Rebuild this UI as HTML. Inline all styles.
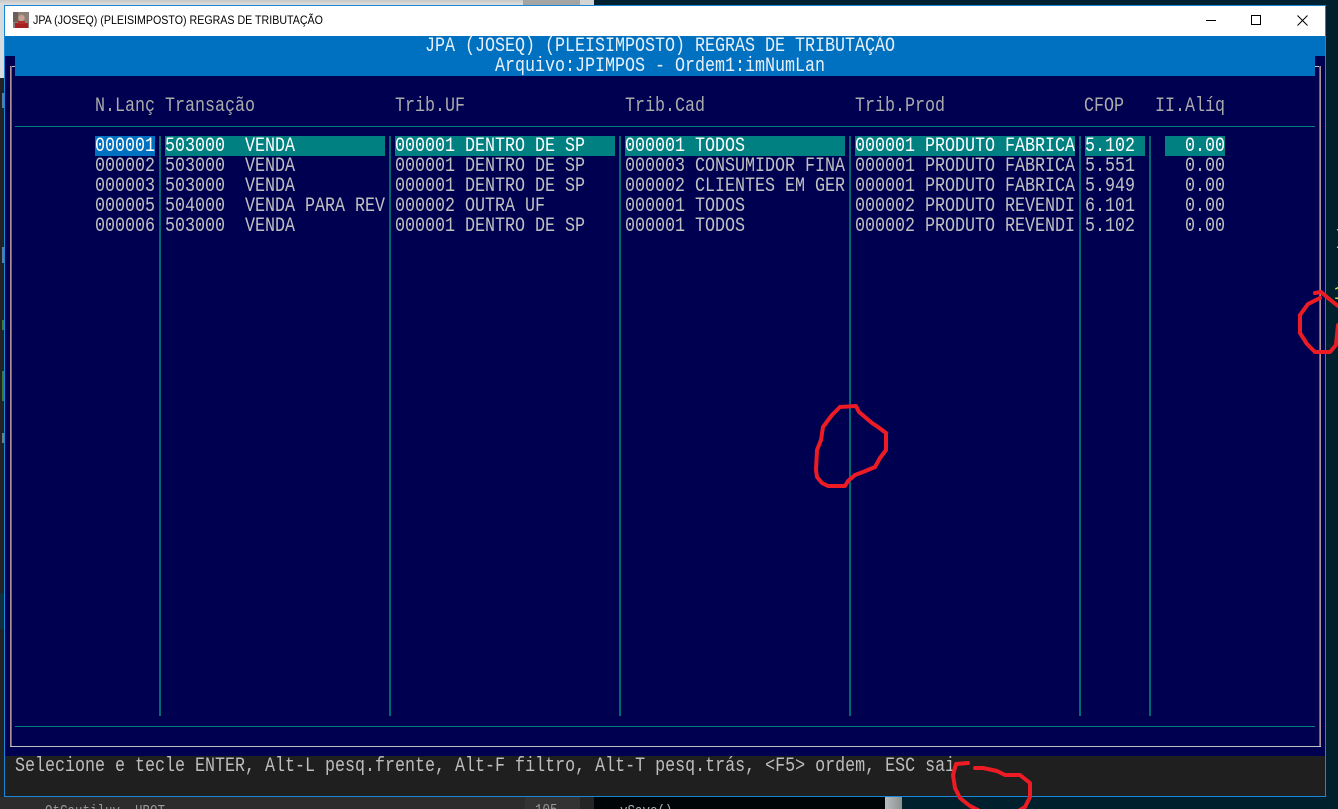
<!DOCTYPE html>
<html><head><meta charset="utf-8"><style>
html,body{margin:0;padding:0;background:#00202e}
#r{position:relative;width:1338px;height:809px;overflow:hidden;background:#00202e;font-family:"Liberation Mono",monospace}
#r div{position:absolute}
.t{font-size:20px;line-height:20px;height:20px;white-space:pre;transform:scaleX(.8333);transform-origin:0 0;color:#c0c0c0;letter-spacing:0}
.h{color:#ababab}
.w{color:#fff}
.v{width:2px;top:136px;height:580px;background:#006a70}
.s{height:20px;top:136px;background:#008080}
</style></head><body><div id="r">
<!-- background -->
<div style="left:0;top:0;width:523px;height:5px;background:linear-gradient(#c8c8c8,#dedede)"></div>
<div style="left:523px;top:0;width:57px;height:5px;background:#a4a4a4"></div>
<div style="left:580px;top:0;width:14px;height:5px;background:#d4d4d4"></div>
<div style="left:594px;top:0;width:744px;height:5px;background:#001f2f"></div>
<div style="left:0;top:5px;width:4px;height:800px;background:#232324"></div>
<div style="left:0;top:5px;width:4px;height:73px;background:#d4dce0"></div>
<div style="left:2px;top:93px;width:2px;height:15px;background:#5a7f9c"></div>
<div style="left:2px;top:247px;width:2px;height:16px;background:#5a7f9c"></div>
<div style="left:2px;top:320px;width:2px;height:10px;background:#3c7a3c"></div>
<div style="left:2px;top:371px;width:2px;height:30px;background:#3c7a3c"></div>
<div style="left:2px;top:433px;width:2px;height:10px;background:#707a80"></div>
<div style="left:0;top:593px;width:4px;height:36px;background:#10303f"></div>
<div style="left:0;top:797px;width:525px;height:12px;background:#2c2c2c"></div>
<div style="left:525px;top:797px;width:55px;height:12px;background:#333"></div>
<div style="left:580px;top:797px;width:14px;height:12px;background:#252525"></div>
<div style="left:594px;top:797px;width:291px;height:12px;background:#000608"></div>
<div style="left:885px;top:797px;width:17px;height:12px;background:linear-gradient(90deg,#b8bcbc,#8c9090)"></div>
<div class="t" style="left:45px;top:802px;font-size:15px;color:#9a9a9a">OtCautiluv  HBOT</div>
<div class="t" style="left:535px;top:801px;font-size:15px;color:#9a9a9a">105</div>
<div class="t" style="left:620px;top:802px;font-size:15px;color:#b0b0b0">vSave()</div>
<div class="t" style="left:1334px;top:230px;color:#c8e040">)</div>
<div class="t" style="left:1334px;top:285px;color:#c8e040">1</div>

<!-- window -->
<div style="left:4px;top:5px;width:1320px;height:790px;border:1px solid #1a86d8;background:#000050"></div>
<div style="left:5px;top:6px;width:1320px;height:30px;background:#fff"></div>
<svg style="position:absolute;left:13px;top:12px" width="16" height="16" viewBox="0 0 16 16">
<rect width="16" height="16" fill="#8a8078"/><rect x="0" y="0" width="5" height="10" fill="#6a6058"/><circle cx="8.5" cy="6" r="3.2" fill="#c8a090"/><rect x="2" y="11" width="13" height="5" fill="#a82020"/><rect x="5" y="9" width="7" height="3" fill="#b03030"/>
</svg>
<div style="left:33px;top:13px;font:12px/15px 'Liberation Sans',sans-serif;color:#000;white-space:nowrap;transform:scaleX(.888);transform-origin:0 0">JPA (JOSEQ) (PLEISIMPOSTO) REGRAS DE TRIBUTAÇÃO</div>
<div style="left:1206px;top:20px;width:10px;height:1px;background:#000"></div>
<div style="left:1251px;top:15px;width:8px;height:8px;border:1px solid #000"></div>
<svg style="position:absolute;left:1297px;top:15px" width="11" height="11" viewBox="0 0 11 11"><path d="M.5.5l10 10M10.5.5l-10 10" stroke="#000" stroke-width="1" fill="none"/></svg>

<!-- header band -->
<div style="left:5px;top:36px;width:1320px;height:20px;background:#0070c0"></div>
<div style="left:15px;top:56px;width:1300px;height:20px;background:#0070c0"></div>
<!-- frame -->
<div style="left:10px;top:66px;width:5px;height:1px;background:#c0c0c0"></div>
<div style="left:10px;top:66px;width:1px;height:680px;background:#b09090"></div>
<div style="left:11px;top:66px;width:1px;height:680px;background:#706088"></div>
<div style="left:1315px;top:66px;width:5px;height:1px;background:#c0c0c0"></div>
<div style="left:1319px;top:66px;width:1px;height:680px;background:#706088"></div>
<div style="left:1320px;top:66px;width:1px;height:680px;background:#b09090"></div>
<div style="left:10px;top:746px;width:1311px;height:1px;background:#c0c0c0"></div>

<div class="t w" style="left:425px;top:37px;color:#e8f0f8">JPA (JOSEQ) (PLEISIMPOSTO) REGRAS DE TRIBUTAÇÃO</div>
<div class="t w" style="left:495px;top:57px;color:#e8f0f8">Arquivo:JPIMPOS - Ordem1:imNumLan</div>

<!-- headers -->
<div class="t h" style="left:95px;top:97px">N.Lanç</div>
<div class="t h" style="left:165px;top:97px">Transação</div>
<div class="t h" style="left:395px;top:97px">Trib.UF</div>
<div class="t h" style="left:625px;top:97px">Trib.Cad</div>
<div class="t h" style="left:855px;top:97px">Trib.Prod</div>
<div class="t h" style="left:1084px;top:97px">CFOP</div>
<div class="t h" style="left:1155px;top:97px">II.Alíq</div>

<div style="left:15px;top:126px;width:1300px;height:1px;background:#008080"></div>
<div style="left:15px;top:726px;width:1300px;height:1px;background:#008080"></div>

<!-- grid lines -->
<div class="v" style="left:159px"></div>
<div class="v" style="left:389px"></div>
<div class="v" style="left:619px"></div>
<div class="v" style="left:849px"></div>
<div class="v" style="left:1079px"></div>
<div class="v" style="left:1149px"></div>

<!-- selection -->
<div class="s" style="left:95px;width:60px;background:#0070c0"></div>
<div class="s" style="left:165px;width:220px"></div>
<div class="s" style="left:395px;width:220px"></div>
<div class="s" style="left:625px;width:220px"></div>
<div class="s" style="left:855px;width:220px"></div>
<div class="s" style="left:1085px;width:60px"></div>
<div class="s" style="left:1165px;width:60px"></div>

<!-- rows -->
<div class="t w" style="left:95px;top:137px">000001</div><div class="t w" style="left:165px;top:137px">503000  VENDA</div><div class="t w" style="left:395px;top:137px">000001 DENTRO DE SP</div><div class="t w" style="left:625px;top:137px">000001 TODOS</div><div class="t w" style="left:855px;top:137px">000001 PRODUTO FABRICA</div><div class="t w" style="left:1085px;top:137px">5.102</div><div class="t w" style="left:1185px;top:137px">0.00</div>

<div class="t" style="left:95px;top:157px">000002</div><div class="t" style="left:165px;top:157px">503000  VENDA</div><div class="t" style="left:395px;top:157px">000001 DENTRO DE SP</div><div class="t" style="left:625px;top:157px">000003 CONSUMIDOR FINA</div><div class="t" style="left:855px;top:157px">000001 PRODUTO FABRICA</div><div class="t" style="left:1085px;top:157px">5.551</div><div class="t" style="left:1185px;top:157px">0.00</div>

<div class="t" style="left:95px;top:177px">000003</div><div class="t" style="left:165px;top:177px">503000  VENDA</div><div class="t" style="left:395px;top:177px">000001 DENTRO DE SP</div><div class="t" style="left:625px;top:177px">000002 CLIENTES EM GER</div><div class="t" style="left:855px;top:177px">000001 PRODUTO FABRICA</div><div class="t" style="left:1085px;top:177px">5.949</div><div class="t" style="left:1185px;top:177px">0.00</div>

<div class="t" style="left:95px;top:197px">000005</div><div class="t" style="left:165px;top:197px">504000  VENDA PARA REV</div><div class="t" style="left:395px;top:197px">000002 OUTRA UF</div><div class="t" style="left:625px;top:197px">000001 TODOS</div><div class="t" style="left:855px;top:197px">000002 PRODUTO REVENDI</div><div class="t" style="left:1085px;top:197px">6.101</div><div class="t" style="left:1185px;top:197px">0.00</div>

<div class="t" style="left:95px;top:217px">000006</div><div class="t" style="left:165px;top:217px">503000  VENDA</div><div class="t" style="left:395px;top:217px">000001 DENTRO DE SP</div><div class="t" style="left:625px;top:217px">000001 TODOS</div><div class="t" style="left:855px;top:217px">000002 PRODUTO REVENDI</div><div class="t" style="left:1085px;top:217px">5.102</div><div class="t" style="left:1185px;top:217px">0.00</div>

<!-- status -->
<div style="left:5px;top:756px;width:1320px;height:40px;background:#1f1f1f"></div>
<div class="t" style="left:15px;top:757px;color:#bdbdbd">Selecione e tecle ENTER, Alt-L pesq.frente, Alt-F filtro, Alt-T pesq.trás, &lt;F5&gt; ordem, ESC sai</div>

<!-- red scribbles -->
<svg style="position:absolute;left:0;top:0" width="1338" height="809" viewBox="0 0 1338 809" fill="none" stroke="#ed1c24" stroke-width="4" stroke-linejoin="round" stroke-linecap="round">
<path d="M840 407L856 406L859 412L872 423L878 427L886 433L886 450L880 458L875 467L863 472L855 475L848 481L845 486L828 486L822 483L817 477L816 470L817 450L821 440L823 427L832 415L840 407"/>
<path d="M1315 293L1321 292L1328 298L1338 306M1320 298L1308 304L1300 315L1300 333L1307 344L1315 352L1330 352L1336 345L1338 325"/>
<path d="M968 763L956 764L953 775L955 788L960 798L970 806L978 810M975 768L983 768L997 771L1005 775L1020 775L1030 783L1030 797L1025 807L1020 810"/>
</svg>
</div></body></html>
